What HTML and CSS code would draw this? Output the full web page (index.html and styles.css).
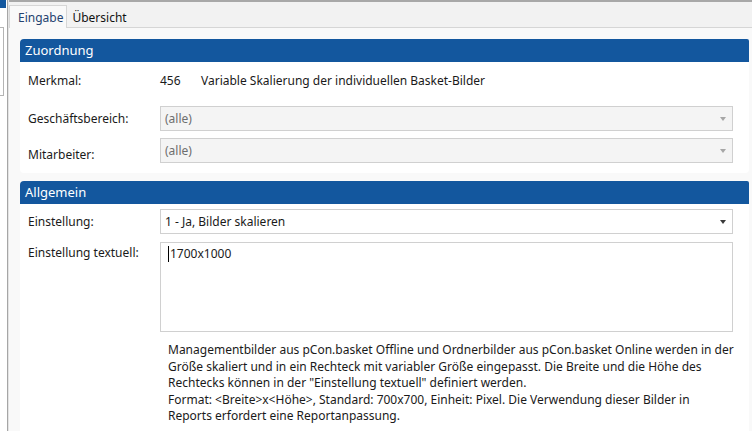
FILE: index.html
```html
<!DOCTYPE html>
<html lang="de">
<head>
    <meta charset="UTF-8">
    <meta name="viewport" content="width=device-width, initial-scale=1.0">
    <title>Merkmal 456</title>
    <link rel="stylesheet" href="styles.css">
</head>
<body>
    <div class="window">
        <!-- Navigation strip on the left (collapsed) -->
        <aside class="side">
            <div class="side-mark"></div>
            <div class="side-field"></div>
        </aside>

        <div class="main">
            <nav class="tabs">
                <button class="tab active">Eingabe</button>
                <button class="tab">Übersicht</button>
            </nav>

            <div class="content">
                <!-- Zuordnung -->
                <section class="panel">
                    <h2 class="panel-head">Zuordnung</h2>
                    <div class="panel-body">
                        <div class="row row-info">
                            <span class="label">Merkmal:</span>
                            <div class="info">
                                <span class="code">456</span>
                                <span>Variable Skalierung der individuellen Basket-Bilder</span>
                            </div>
                        </div>
                        <div class="row">
                            <span class="label">Geschäftsbereich:</span>
                            <div class="select disabled">
                                <span class="select-value">(alle)</span>
                                <span class="arrow"></span>
                            </div>
                        </div>
                        <div class="row row-next">
                            <span class="label label-low">Mitarbeiter:</span>
                            <div class="select disabled">
                                <span class="select-value">(alle)</span>
                                <span class="arrow"></span>
                            </div>
                        </div>
                    </div>
                </section>

                <!-- Allgemein -->
                <section class="panel panel-grow">
                    <h2 class="panel-head">Allgemein</h2>
                    <div class="panel-body panel-body-tight">
                        <div class="row">
                            <span class="label">Einstellung:</span>
                            <div class="select">
                                <span class="select-value">1 - Ja, Bilder skalieren</span>
                                <span class="arrow"></span>
                            </div>
                        </div>
                        <div class="row row-text">
                            <span class="label label-top">Einstellung textuell:</span>
                            <div class="textbox"><span class="caret"></span>1700x1000</div>
                        </div>
                        <div class="row">
                            <span></span>
                            <p class="hint">
                                Managementbilder aus pCon.basket Offline und Ordnerbilder aus pCon.basket Online werden in der<br>
                                Größe skaliert und in ein Rechteck mit variabler Größe eingepasst. Die Breite und die Höhe des<br>
                                Rechtecks können in der "Einstellung textuell" definiert werden.<br>
                                Format: &lt;Breite&gt;x&lt;Höhe&gt;, Standard: 700x700, Einheit: Pixel. Die Verwendung dieser Bilder in<br>
                                Reports erfordert eine Reportanpassung.
                            </p>
                        </div>
                    </div>
                </section>
            </div>
        </div>
    </div>
</body>
</html>
```

FILE: styles.css
```css
:root {
    --head-blue: #13579e;
    --field-border: #d0d0d0;
    --content-bg: #f9f9f9;
}

* {
    box-sizing: border-box;
}

body {
    margin: 0;
    height: 100vh;
    overflow: hidden;
    font-family: "Noto Sans", "Open Sans", sans-serif;
    font-size: 12px;
    color: #1a1a1a;
    background: #fff;
}

.window {
    display: flex;
    height: 100vh;
}

/* left strip */
.side {
    flex-shrink: 0;
    width: 8px;
    border-right: 1px solid #a6a6a6;
    background: #fff;
}

.side-mark {
    width: 6px;
    height: 8px;
    background: var(--head-blue);
}

.side-field {
    width: 4px;
    height: 69px;
    margin-top: 19px;
    border: 1px solid #b4b4b4;
    border-left: none;
}

.main {
    flex: 1;
    display: flex;
    flex-direction: column;
    border-left: 1px solid #e4e4e4;
    min-width: 0;
}

/* tabs */
.tabs {
    flex-shrink: 0;
    display: flex;
    align-items: flex-end;
    height: 28px;
    border-top: 2px solid #a8a8a8;
    border-bottom: 1px solid #d6d6d6;
    background: #f2f2f2;
}

.tab {
    font: inherit;
    height: 22px;
    padding: 1px 3px 0 4px;
    border: 1px solid transparent;
    border-bottom: none;
    background: none;
    color: #111;
    cursor: pointer;
}

.tab.active {
    height: 23px;
    margin-bottom: -1px;
    padding-left: 8px;
    border-color: #d6d6d6;
    background: var(--content-bg);
    color: #24426f;
}

.content {
    flex: 1;
    min-height: 0;
    overflow: hidden;
    display: flex;
    flex-direction: column;
    gap: 8px;
    padding: 11px 3px 0 11px;
    background: var(--content-bg);
}

/* panels */
.panel {
    flex-shrink: 0;
    background: #fff;
    border-radius: 4px;
}

.panel-grow {
    flex: 1 0 auto;
    border-bottom-left-radius: 0;
    border-bottom-right-radius: 0;
}

.panel-head {
    margin: 0;
    height: 23px;
    padding-left: 5px;
    line-height: 23px;
    font-size: 13px;
    font-weight: normal;
    color: #fff;
    background: var(--head-blue);
    border-radius: 4px 2px 0 0;
}

.panel-body {
    padding: 2px 16px 10px 8px;
}

.panel-body-tight {
    padding-top: 5px;
}

.row {
    display: grid;
    grid-template-columns: 132px 1fr;
    align-items: center;
}

.row-info {
    height: 32px;
    margin-bottom: 10px;
}

.row-next {
    margin-top: 7px;
}

.row-text {
    align-items: start;
    margin-top: 8px;
}

.label-low {
    padding-top: 8px;
}

.label-top {
    padding-top: 2px;
}

.info {
    display: flex;
}

.code {
    width: 41px;
}

/* combo boxes */
.select {
    display: flex;
    align-items: center;
    height: 25px;
    padding: 0 4px 0 4px;
    border: 1px solid var(--field-border);
    background: #fff;
}

.select-value {
    flex: 1;
}

.select.disabled {
    background: #f4f4f4;
    color: #6e6e6e;
}

.arrow {
    width: 0;
    height: 0;
    margin-right: 2px;
    border-left: 3px solid transparent;
    border-right: 3px solid transparent;
    border-top: 4px solid #3a3a3a;
}

.select.disabled .arrow {
    border-top-color: #a6a6a6;
}

.textbox {
    height: 90px;
    padding: 2px 7px;
    border: 1px solid var(--field-border);
    line-height: 17px;
}

.caret {
    display: inline-block;
    width: 1px;
    height: 16px;
    margin-right: 1px;
    vertical-align: -4px;
    background: #000;
}

.hint {
    margin: 10px 0 0;
    padding-left: 8px;
    line-height: 16.6px;
    white-space: nowrap;
}
```
